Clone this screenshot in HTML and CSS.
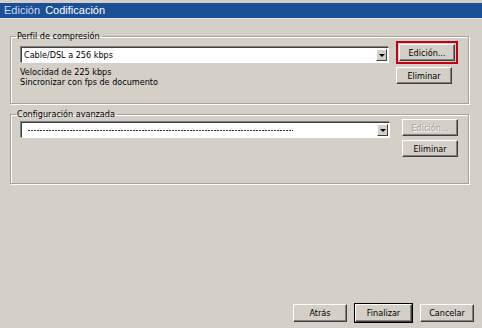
FILE: index.html
```html
<!DOCTYPE html>
<html lang="es">
<head>
    <meta charset="UTF-8">
    <title>Codificación</title>
    <link rel="stylesheet" href="styles.css">
</head>
<body>
    <div class="dialog">
        <div class="title-bar"><span class="crumb">Edición</span> Codificación</div>
        <div class="content">
            <fieldset class="group group--profile">
                <legend>Perfil de compresión</legend>
                <div class="group__row">
                    <div class="group__main">
                        <div class="combo">
                            <span class="combo__value">Cable/DSL a 256 kbps</span>
                            <span class="combo__arrow"></span>
                        </div>
                        <p class="info">Velocidad de 225 kbps<br>Sincronizar con fps de documento</p>
                    </div>
                    <div class="group__buttons">
                        <div class="focus-ring"><button class="btn">Edición...</button></div>
                        <button class="btn">Eliminar</button>
                    </div>
                </div>
            </fieldset>

            <fieldset class="group group--advanced">
                <legend>Configuración avanzada</legend>
                <div class="group__row">
                    <div class="group__main">
                        <div class="combo combo--short">
                            <span class="combo__value combo__value--dashes"></span>
                            <span class="combo__arrow"></span>
                        </div>
                    </div>
                    <div class="group__buttons">
                        <button class="btn" disabled>Edición...</button>
                        <button class="btn">Eliminar</button>
                    </div>
                </div>
            </fieldset>
        </div>
        <div class="footer">
            <button class="btn btn--wide">Atrás</button>
            <button class="btn btn--wide btn--default">Finalizar</button>
            <button class="btn btn--wide">Cancelar</button>
        </div>
    </div>
</body>
</html>
```

FILE: styles.css
```css
body {
    margin: 0;
    background: #d4d0c8;
    font-family: "DejaVu Sans Condensed", "Liberation Sans", sans-serif;
    font-size: 9px;
    color: #000;
}

.dialog {
    width: 482px;
    height: 328px;
    display: flex;
    flex-direction: column;
    padding-top: 3px;
    box-sizing: border-box;
}

.title-bar {
    background: #1b4f96;
    color: #fff;
    height: 15px;
    line-height: 15px;
    padding-left: 4px;
    font-family: "Liberation Sans", sans-serif;
    font-size: 11px;
    border-bottom: 1px solid #e8e6e0;
}

.crumb {
    color: #c9dbf2;
    margin-right: 2px;
}

.content {
    flex: 1;
    padding: 12px 13px 0 10px;
}

.group {
    margin: 0;
    padding: 0 10px 0 9px;
    border: 1px solid #a5a39d;
    box-shadow: inset 1px 1px 0 #fff, 1px 1px 0 #fff;
}

.group--profile {
    height: 73px;
    box-sizing: border-box;
}

.group--advanced {
    margin-top: 5px;
    height: 75px;
    box-sizing: border-box;
}

.group legend {
    padding: 0 2px 0 1px;
    margin-left: -4px;
    font-size: 9px;
    line-height: 10px;
}

.group__row {
    display: flex;
    gap: 7px;
}

.group__main {
    flex: 1;
    padding-top: 6px;
}

.group--advanced .group__main {
    padding-top: 3px;
}

.group__buttons {
    display: flex;
    flex-direction: column;
    gap: 4px;
    padding-top: 0;
}

.group--profile .group__buttons {
    gap: 3px;
}

.combo {
    height: 16px;
    background: #fff;
    border-top: 1px solid #404040;
    border-left: 1px solid #404040;
    border-right: 1px solid #fff;
    border-bottom: 1px solid #fff;
    box-shadow: -1px -1px 0 #808080;
    display: flex;
    align-items: center;
    box-sizing: border-box;
    margin-left: 1px;
}

.combo--short {
    margin-right: 5px;
}

.combo__value {
    flex: 1;
    padding-left: 2px;
    line-height: 14px;
}

.combo__value--dashes {
    height: 1px;
    margin: 0 84px 0 6px;
    background: repeating-linear-gradient(90deg, #333 0 2px, transparent 2px 3px);
}

.combo__arrow {
    width: 11px;
    height: 12px;
    margin-right: 1px;
    background: #d4d0c8;
    border: 1px solid;
    border-color: #fff #404040 #404040 #fff;
    box-sizing: border-box;
    position: relative;
}

.combo__arrow::after {
    content: "";
    position: absolute;
    left: 2px;
    top: 4px;
    border-left: 3px solid transparent;
    border-right: 3px solid transparent;
    border-top: 3px solid #000;
}

.info {
    margin: 4px 0 0;
    line-height: 10px;
}

.btn {
    width: 56px;
    height: 17px;
    padding: 0;
    background: #d4d0c8;
    font-family: inherit;
    font-size: 9px;
    color: #000;
    border: 1px solid;
    border-color: #fff #404040 #404040 #fff;
    box-shadow: inset -1px -1px 0 #808080;
}

.btn:disabled {
    color: #a3a099;
    text-shadow: 1px 1px 0 #fff;
}

.focus-ring {
    border: 2px solid #c40012;
    padding: 1px;
}

.focus-ring .btn {
    display: block;
}

.footer {
    display: flex;
    justify-content: flex-end;
    gap: 8px;
    padding: 0 8px 6px 0;
}

.btn--wide {
    width: 54px;
    height: 18px;
}

.btn--default {
    width: 57px;
    outline: 1px solid #000;
}
```
